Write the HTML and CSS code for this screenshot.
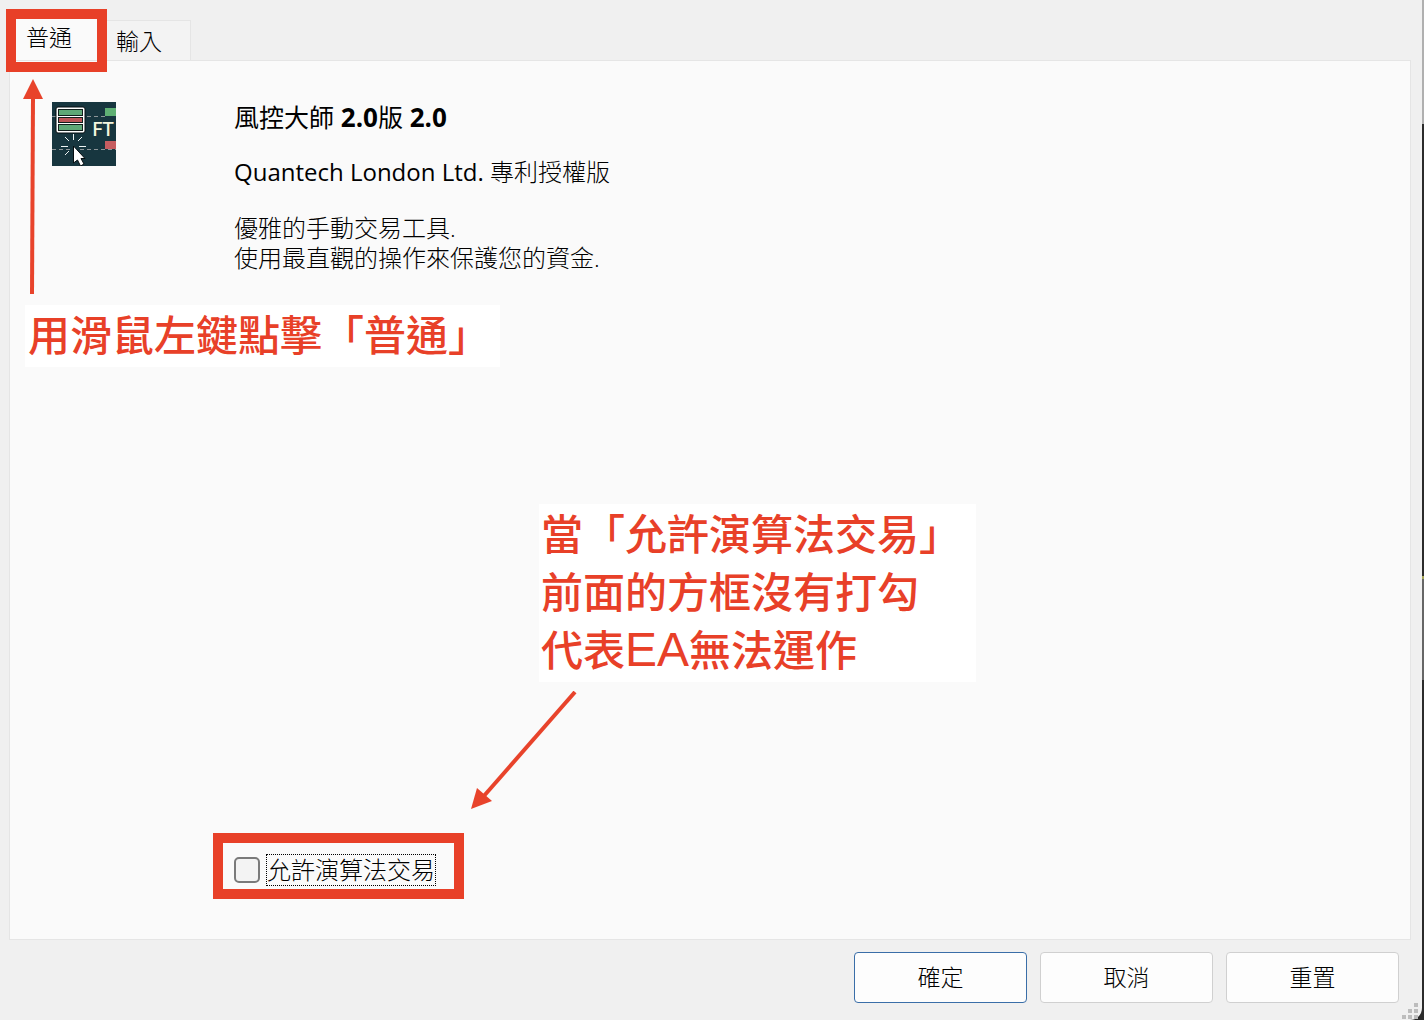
FILE: index.html
```html
<!DOCTYPE html>
<html lang="zh-Hant">
<head>
  <meta charset="UTF-8" />
  <meta name="viewport" content="width=device-width, initial-scale=1.0"/>
  <title>風控大師 2.0版 2.0</title>
  <link rel="stylesheet" href="styles.css">
</head>
<body>

  <main class="dialog">
    <div class="tabs" role="tablist">
      <button type="button" class="tab active" role="tab" aria-selected="true">普通<span class="highlight tab-highlight"></span></button>
      <button type="button" class="tab" role="tab" aria-selected="false">輸入</button>
    </div>

    <section class="panel">
      <div class="about">
        <svg class="app-icon" viewBox="0 0 64 64" aria-hidden="true">
          <rect width="64" height="64" fill="#17363f"/>
          <path d="M0 14.5H54M0 47.5H64" stroke="#8d9598" stroke-dasharray="4 3"/>
          <rect x="4" y="5" width="29" height="26" rx="2" fill="#fff" stroke="#050d10"/>
          <g stroke="#111f1c">
            <rect x="6.500" y="7.500" width="24" height="6" fill="#5fa877"/>
            <rect x="6.500" y="15.500" width="24" height="5" fill="#bd5558"/>
            <rect x="6.500" y="22.500" width="24" height="6" fill="#5fa877"/>
          </g>
          <rect x="53" y="6" width="11" height="8" fill="#5fb074"/>
          <rect x="53" y="39" width="11" height="8" fill="#c65d60"/>
          <text x="40" y="34" class="icon-text">FT</text>
          <path d="M21.500 32v6M13 35l4 4M30 35l-4 4M9 44.500h7M27 44.500h7M17 49l-4 4" stroke="#eef4f4" fill="none"/>
          <path d="M21.500 44v17l4-3 3 6 3.500-2-3-5.500h4z" fill="#fff" stroke="#050d10"/>
        </svg>
        <div class="about-text">
          <h1><span>風控大師</span> 2.0<span>版</span> 2.0</h1>
          <p><span class="company">Quantech London Ltd.</span> 專利授權版</p>
          <p>優雅的手動交易工具.<br>使用最直觀的操作來保護您的資金.</p>
        </div>
      </div>

      <div class="option">
        <input type="checkbox" id="allowAlgo">
        <label for="allowAlgo">允許演算法交易</label>
        <span class="highlight option-highlight"></span>
      </div>

      <div class="note note-tab">
        用滑鼠左鍵點擊「普通」
        <svg class="arrow arrow-up" viewBox="0 0 22 216" aria-hidden="true">
          <path d="M11 18L10 215" stroke="#e8432b" stroke-width="4"/>
          <path d="M11 0L21 20H1z" fill="#e8432b"/>
        </svg>
      </div>

      <div class="note note-option">
        當「允許演算法交易」<br>
        前面的方框沒有打勾<br>
        代表<span class="latin">EA</span>無法運作
        <svg class="arrow arrow-down" viewBox="0 0 106 119" aria-hidden="true">
          <path d="M104 1L12 106" stroke="#e8432b" stroke-width="4"/>
          <path d="M0 118L6 97L21 110z" fill="#e8432b"/>
        </svg>
      </div>
    </section>

    <footer class="actions">
      <button type="button" class="btn primary">確定</button>
      <button type="button" class="btn">取消</button>
      <button type="button" class="btn">重置</button>
    </footer>

    <svg class="grip" viewBox="0 0 16 16" aria-hidden="true">
      <path d="M12 0h4v4h-4zM6 6h4v4H6zM12 6h4v4h-4zM0 12h4v4H0zM6 12h4v4H6zM12 12h4v4h-4z" fill="#bdbdbd"/>
    </svg>
  </main>

</body>
</html>
```
FILE: styles.css
```css
* {
  box-sizing: border-box;
}
body {
  margin: 0;
  background: linear-gradient(#b0b0b0 0 124px, #2b2b2b 124px 576px, #a5a556 576px 579px, #666 579px 680px, #2b2b2b 680px);
  font-family: "Open Sans", "Noto Sans CJK TC", sans-serif;
  font-size: 24px;
  font-weight: 300;
  line-height: 30px;
  color: #000;
}
.dialog {
  position: relative;
  display: flex;
  flex-direction: column;
  min-height: 100vh;
  margin-right: 2px;
  background: #f0f0f0;
  border-bottom-right-radius: 12px;
}
.tabs {
  display: flex;
  align-items: flex-end;
  height: 60px;
  padding-left: 9px;
}
.tab {
  position: relative;
  height: 40px;
  padding: 0 28px 0 9px;
  border: 1px solid #e5e5e5;
  border-bottom: none;
  background: #f3f3f3;
  font: inherit;
  font-size: 23px;
  color: inherit;
}
.tab.active {
  height: 48px;
  padding: 0 33px 0 16px;
  background: #fafafa;
  z-index: 1;
}
.highlight {
  position: absolute;
  border: 10px solid #e84028;
  pointer-events: none;
}
.tab-highlight {
  inset: -4px -2px -12px -4px;
}
.panel {
  position: relative;
  flex: 1;
  display: flex;
  flex-direction: column;
  margin: 0 11px 0 9px;
  padding: 41px 42px 53px;
  border: 1px solid #e5e5e5;
  background: #fafafa;
}
.about {
  display: grid;
  grid-template-columns: 182px 1fr;
}
.app-icon {
  width: 64px;
  height: 64px;
}
.icon-text {
  font: 500 20px "Noto Sans", sans-serif;
  fill: #f4f6df;
}
.about-text h1 {
  margin: 0 0 25px;
  font-size: 26px;
  font-weight: 700;
  line-height: 30px;
}
.about-text h1 span {
  font-size: 25px;
  font-weight: 400;
}
.about-text p {
  margin: 0 0 26px;
}
.company {
  font-weight: 400;
}
.option {
  position: relative;
  display: flex;
  align-items: center;
  gap: 6px;
  align-self: flex-start;
  margin-top: auto;
  margin-left: 182px;
}
.option input {
  appearance: none;
  width: 26px;
  height: 26px;
  margin: 0;
  border: 2px solid #7a7a7a;
  border-radius: 5px;
  background: #f3f3f3;
}
.option label {
  border: 1px dotted #000;
}
.option-highlight {
  inset: -21px -28px -13px -21px;
}
.note {
  position: absolute;
  background: #fff;
  color: #e84028;
  font-size: 42px;
  font-weight: 500;
  line-height: 58px;
}
.note-tab {
  top: 244px;
  left: 15px;
  padding: 1px 10px 3px 3px;
}
.note-option {
  top: 443px;
  left: 529px;
  padding: 1px 15px 3px 2px;
}
.latin {
  font-family: "Liberation Sans", sans-serif;
  font-size: 48px;
  line-height: 1;
}
.arrow {
  position: absolute;
}
.arrow-up {
  bottom: 72px;
  left: -3px;
  width: 22px;
  height: 216px;
}
.arrow-down {
  top: 187px;
  left: -68px;
  width: 106px;
  height: 119px;
}
.actions {
  display: flex;
  justify-content: flex-end;
  gap: 13px;
  padding: 12px 23px 17px;
}
.btn {
  width: 173px;
  height: 51px;
  padding: 0 0 2px;
  border: 1px solid #d0d0d0;
  border-radius: 4px;
  background: #fdfdfd;
  font: inherit;
  font-size: 23px;
  color: inherit;
}
.btn.primary {
  border-color: #3a6ea8;
}
.grip {
  position: absolute;
  right: 4px;
  bottom: 1px;
  width: 16px;
  height: 16px;
}
```
